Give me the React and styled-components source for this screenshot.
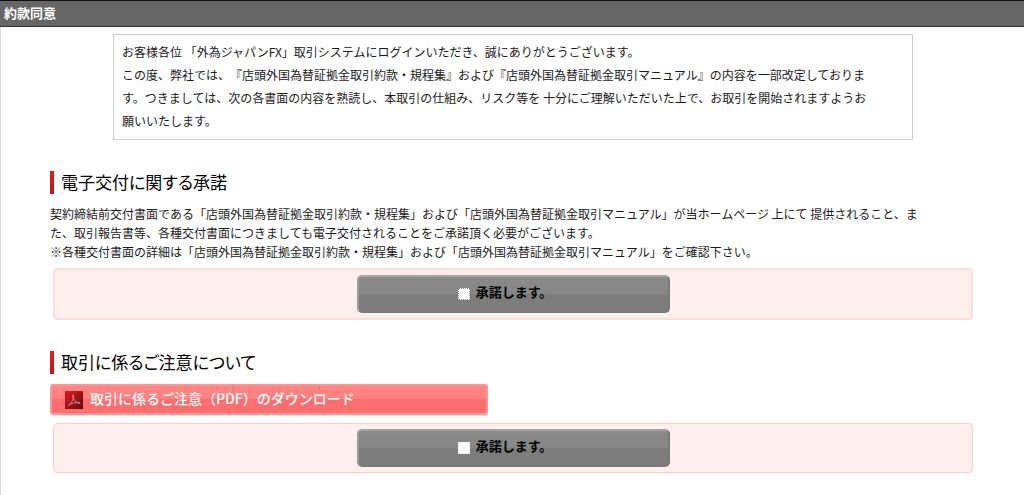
import React from 'react';
import styled, { createGlobalStyle } from 'styled-components';

const GlobalStyle = createGlobalStyle`
  *, *::before, *::after { box-sizing: border-box; }
  html { background: #fff; }
  body {
    margin: 0;
    color: #1a1a1a;
    font-family: "Noto Sans CJK JP", sans-serif;
    font-size: 12px;
    text-spacing-trim: space-all;
  }
`;

const Page = styled.div`
  display: flex;
  flex-direction: column;
  min-height: 100vh;
`;

const TitleBar = styled.header`
  height: 27px;
  padding: 0 4px;
  border-top: 1px solid #111;
  border-bottom: 1px solid #333;
  background: #666;
`;

const PageTitle = styled.h1`
  margin: 0;
  color: #fff;
  font-size: 13px;
  font-weight: 700;
  line-height: 23px;
`;

const Content = styled.main`
  flex: 1;
  padding: 7px 48px 0 49px;
  border-left: 1px solid #ddd;
`;

const Notice = styled.p`
  max-width: 800px;
  margin: 0 auto 31px;
  padding: 5px 8px 7px;
  border: 1px solid #ccc;
  line-height: 23px;
`;

const Section = styled.section`
  margin-bottom: 31px;

  &:last-child { margin-bottom: 0; }
`;

const Heading = styled.h2`
  margin: 0 0 10px;
  padding: 0 0 2px 7px;
  border-style: solid;
  border-width: 0 0 0 4px;
  border-image: linear-gradient(#ee1c1c, #b81818) 1;
  color: #000;
  font-size: 17px;
  font-weight: 400;
  line-height: 21px;
  font-feature-settings: "palt";
`;

const Text = styled.p`
  margin: 0 0 7px;
  line-height: 19px;
`;

const ConsentPanel = styled.div`
  display: flex;
  justify-content: center;
  margin: 0 3px;
  padding: 5px;
  border: ${(p) => (p.$strong ? '2px solid #ffdcdc' : '1px solid #ffcccc')};
  border-radius: 4px;
  background: #ffeeee;
`;

const ConsentLabel = styled.label`
  display: flex;
  align-items: center;
  justify-content: center;
  gap: 6px;
  width: 313px;
  height: 38px;
  padding-right: 16px;
  border: 2px solid;
  border-color: #a2a6a2 #777b77 #777b77 #999d99;
  border-radius: 5px;
  background: linear-gradient(#8a8a8a 0, #868686 50%, #7d7d7d 50%, #7d7d7d 100%);
  color: #000;
  font-size: 13px;
  font-weight: 700;
`;

const ConsentText = styled.span`
  padding-bottom: 4px;
  line-height: 20px;
`;

const Checkbox = styled.input`
  appearance: none;
  width: 12px;
  height: 12px;
  margin: 0;
  border: 1px ${(p) => (p.$dotted ? 'dotted #888' : 'solid #eee')};
  background: #fff;

  &:checked { background: #c22; }
`;

const DownloadLink = styled.a`
  display: flex;
  align-items: center;
  gap: 7px;
  max-width: 438px;
  height: 31px;
  margin-bottom: 8px;
  padding: 0 13px;
  border: 2px solid #ff9696;
  border-radius: 3px;
  background: linear-gradient(#ff8585 0, #ff8080 50%, #ff6e6e 50%, #ff6e6e 100%);
  color: #fff;
  font-size: 14px;
  font-weight: 500;
  line-height: 23px;
  text-decoration: none;
`;

const DownloadText = styled.span`
  padding-bottom: 2px;
`;

function PdfIcon() {
  return (
    <svg width="18" height="18" viewBox="0 0 18 18" aria-hidden="true">
      <defs>
        <linearGradient id="pdfRed" x1="0" y1="0" x2="1" y2="1">
          <stop offset="0" stopColor="#ea1b20" />
          <stop offset="0.5" stopColor="#a01418" />
          <stop offset="1" stopColor="#5c0c0c" />
        </linearGradient>
      </defs>
      <rect width="18" height="18" fill="url(#pdfRed)" />
      <path
        d="M3.4 14.6C6 12.6 8.8 8.6 8.4 4.4C8.3 3.4 7.6 3.8 7.8 5C8.4 8.4 11 11.8 14.4 12.5C15.4 12.6 15.4 11.7 14.2 11.6C10.6 11.4 6.6 12.2 4 14C3.2 14.6 3 15 3.4 14.6Z"
        fill="none"
        stroke="#e0a0a0"
        strokeWidth="0.8"
      />
    </svg>
  );
}

function Consent({ id, strong }) {
  return (
    <ConsentPanel $strong={strong}>
      <ConsentLabel htmlFor={id}>
        <Checkbox type="checkbox" id={id} $dotted={strong} />
        <ConsentText>承諾します。</ConsentText>
      </ConsentLabel>
    </ConsentPanel>
  );
}

export default function App() {
  return (
    <Page>
      <GlobalStyle />
      <TitleBar>
        <PageTitle>約款同意</PageTitle>
      </TitleBar>
      <Content>
        <Notice>
          お客様各位 「外為ジャパンFX」取引システムにログインいただき、誠にありがとうございます。
          <br />
          この度、弊社では、『店頭外国為替証拠金取引約款・規程集』および『店頭外国為替証拠金取引マニュアル』の内容を一部改定しておりま
          <br />
          す。つきましては、次の各書面の内容を熟読し、本取引の仕組み、リスク等を 十分にご理解いただいた上で、お取引を開始されますようお
          <br />
          願いいたします。
        </Notice>

        <Section>
          <Heading>電子交付に関する承諾</Heading>
          <Text>
            契約締結前交付書面である「店頭外国為替証拠金取引約款・規程集」および「店頭外国為替証拠金取引マニュアル」が当ホームページ 上にて 提供されること、ま
            <br />
            た、取引報告書等、各種交付書面につきましても電子交付されることをご承諾頂く必要がございます。
            <br />
            ※各種交付書面の詳細は「店頭外国為替証拠金取引約款・規程集」および「店頭外国為替証拠金取引マニュアル」をご確認下さい。
          </Text>
          <Consent id="consent-delivery" strong />
        </Section>

        <Section>
          <Heading>取引に係るご注意について</Heading>
          <DownloadLink href="#pdf">
            <PdfIcon />
            <DownloadText>取引に係るご注意（PDF）のダウンロード</DownloadText>
          </DownloadLink>
          <Consent id="consent-caution" />
        </Section>
      </Content>
    </Page>
  );
}
